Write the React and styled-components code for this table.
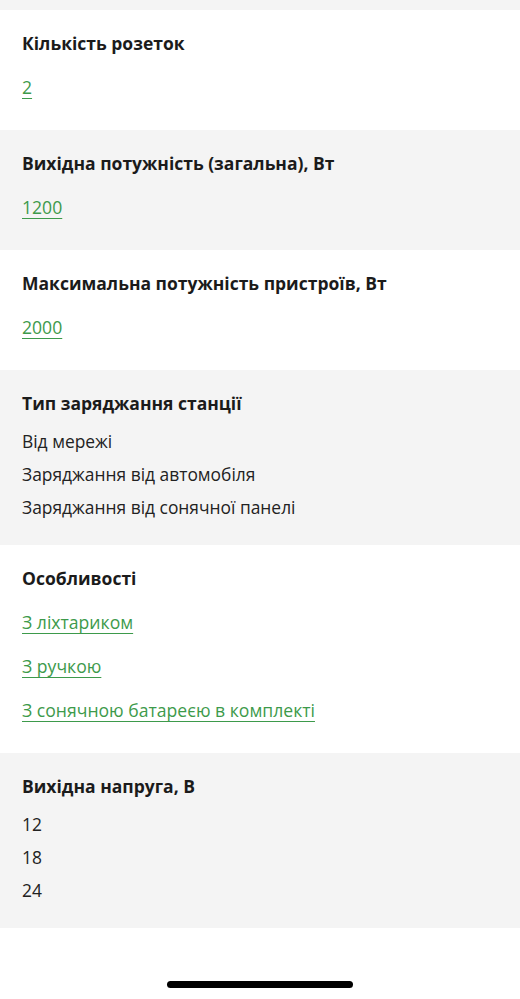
import React from 'react';
import styled, { createGlobalStyle } from 'styled-components';

const GlobalStyle = createGlobalStyle`
  html, body {
    margin: 0;
    padding: 0;
    background: #ffffff;
  }
  body {
    font-family: "Open Sans", "Noto Sans", "Liberation Sans", sans-serif;
    color: #1b1b1b;
    -webkit-font-smoothing: antialiased;
  }
`;

const Page = styled.div`
  width: 520px;
  min-height: 999px;
  display: flex;
  flex-direction: column;
  background: #ffffff;
`;

const TopStrip = styled.div`
  height: 10px;
  background: #f4f4f4;
`;

const Section = styled.section`
  background: ${({ $shaded }) => ($shaded ? '#f4f4f4' : '#ffffff')};
  padding: 21px 22px 21px;
  display: flex;
  flex-direction: column;
`;

const Title = styled.h3`
  margin: 0 0 10px;
  font-size: 17.5px;
  line-height: 24px;
  font-weight: 700;
  color: #1b1b1b;
`;

const Plain = styled.div`
  font-size: 17.4px;
  line-height: 33px;
  color: #222;
`;

const Link = styled.a`
  align-self: flex-start;
  font-size: 17.6px;
  line-height: 44px;
  color: #3d9a4b;
  text-decoration: underline;
  text-underline-offset: 4px;
  text-decoration-thickness: 1px;
  cursor: pointer;
`;

const Spacer = styled.div`
  flex: 1;
`;

const HomeBar = styled.div`
  align-self: center;
  width: 186px;
  height: 7px;
  border-radius: 4px;
  background: #000;
  margin-bottom: 11px;
`;

const specs = [
  { title: 'Кількість розеток', links: ['2'] },
  { title: 'Вихідна потужність (загальна), Вт', links: ['1200'] },
  { title: 'Максимальна потужність пристроїв, Вт', links: ['2000'] },
  {
    title: 'Тип заряджання станції',
    items: ['Від мережі', 'Заряджання від автомобіля', 'Заряджання від сонячної панелі'],
  },
  {
    title: 'Особливості',
    links: ['З ліхтариком', 'З ручкою', 'З сонячною батареєю в комплекті'],
  },
  { title: 'Вихідна напруга, В', items: ['12', '18', '24'] },
];

export default function App() {
  return (
    <>
      <GlobalStyle />
      <Page>
        <TopStrip />
        {specs.map((s, i) => (
          <Section key={s.title} $shaded={i % 2 === 1}>
            <Title>{s.title}</Title>
            {s.links && s.links.map((l) => <Link key={l}>{l}</Link>)}
            {s.items && s.items.map((t) => <Plain key={t}>{t}</Plain>)}
          </Section>
        ))}
        <Spacer />
        <HomeBar />
      </Page>
    </>
  );
}
